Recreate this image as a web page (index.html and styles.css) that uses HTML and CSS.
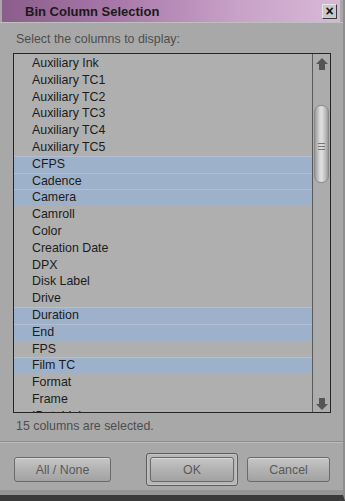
FILE: index.html
```html
<!DOCTYPE html>
<html>
<head>
<meta charset="utf-8">
<link rel="stylesheet" href="styles.css">
</head>
<body>
<div class="window">
  <div class="titlebar">
    <span class="title">Bin Column Selection</span>
    <span class="close">×</span>
  </div>
  <div class="title-line"></div>
  <div class="content">
    <div class="prompt">Select the columns to display:</div>
    <div class="listbox">
      <div class="list">
        <div class="row">Auxiliary Ink</div>
        <div class="row">Auxiliary TC1</div>
        <div class="row">Auxiliary TC2</div>
        <div class="row">Auxiliary TC3</div>
        <div class="row">Auxiliary TC4</div>
        <div class="row">Auxiliary TC5</div>
        <div class="row sel">CFPS</div>
        <div class="row sel">Cadence</div>
        <div class="row sel">Camera</div>
        <div class="row">Camroll</div>
        <div class="row">Color</div>
        <div class="row">Creation Date</div>
        <div class="row">DPX</div>
        <div class="row">Disk Label</div>
        <div class="row">Drive</div>
        <div class="row sel">Duration</div>
        <div class="row sel">End</div>
        <div class="row">FPS</div>
        <div class="row sel">Film TC</div>
        <div class="row">Format</div>
        <div class="row">Frame</div>
        <div class="row">IDataLink</div>
      </div>
      <div class="scrollbar">
        <div class="arrow up">
          <svg width="12" height="12" viewBox="0 0 12 12"><polygon points="6,0 12,6 9,6 9,12 3,12 3,6 0,6" fill="#555"/></svg>
        </div>
        <div class="track">
          <div class="thumb">
            <div class="grip"></div>
          </div>
        </div>
        <div class="arrow down">
          <svg width="12" height="12" viewBox="0 0 12 12"><polygon points="6,12 12,6 9,6 9,0 3,0 3,6 0,6" fill="#555"/></svg>
        </div>
      </div>
    </div>
    <div class="status">15 columns are selected.</div>
  </div>
  <div class="separator"></div>
  <div class="buttons">
    <button class="btn allnone">All / None</button>
    <div class="focus-ring"><button class="btn ok">OK</button></div>
    <button class="btn cancel">Cancel</button>
  </div>
</div>
</body>
</html>
```
FILE: styles.css
```css
html, body {
  margin: 0;
  padding: 0;
  background: #a8a8a8;
}
.window {
  width: 345px;
  height: 501px;
  box-sizing: border-box;
  display: flex;
  flex-direction: column;
  background: #a8a8a8;
  border-bottom: 6px solid #3a3a3a;
  border-right: 2px solid #8e8e8e;
  font-family: "Liberation Sans", Arial, sans-serif;
  font-size: 12.4px;
  overflow: hidden;
}
.titlebar {
  height: 22px;
  margin: 0 3px 0 2px;
  flex: none;
  display: flex;
  align-items: center;
  justify-content: space-between;
  padding: 0 3px 0 23px;
  background: linear-gradient(to right, #8b5d8b 0%, #a97aa9 35%, #c8a2c8 70%, #d8b8d8 100%);
}
.title {
  font-weight: bold;
  font-size: 13px;
  color: #1a1a1a;
}
.close {
  width: 13px;
  height: 13px;
  display: flex;
  align-items: center;
  justify-content: center;
  background: #c9c9c9;
  border-top: 1px solid #e4e4e4;
  border-left: 1px solid #e4e4e4;
  border-right: 1px solid #3a3a3a;
  border-bottom: 1px solid #3a3a3a;
  font-weight: bold;
  font-size: 14px;
  line-height: 13px;
  color: #111;
}
.title-line {
  height: 1px;
  flex: none;
  background: #bfbfbf;
}
.content {
  flex: none;
  padding: 0 12px 0 13px;
}
.prompt {
  height: 30px;
  box-sizing: border-box;
  padding: 8px 0 0 3px;
  line-height: 16px;
  color: #4e4e4e;
}
.listbox {
  height: 360px;
  box-sizing: border-box;
  border: 1px solid #262626;
  display: flex;
  background: #afafaf;
}
.list {
  flex: 1;
  overflow: hidden;
  padding-top: 1px;
}
.row {
  height: 16.8px;
  line-height: 16.8px;
  padding-left: 18px;
  color: #1c1c1c;
  white-space: nowrap;
}
.row.sel {
  background: #9eb1ca;
  box-shadow: inset 0 1px 0 #b3bfd0;
}
.scrollbar {
  width: 17px;
  flex: none;
  border-left: 1px solid #5a5a5a;
  display: flex;
  flex-direction: column;
  background: #acacac;
}
.arrow {
  display: flex;
  justify-content: center;
  flex: none;
}
.arrow.up {
  align-items: flex-start;
  padding-top: 4px;
  height: 14px;
}
.arrow.down {
  align-items: flex-end;
  padding-bottom: 2px;
  height: 14px;
}
.track {
  flex: 1;
  padding: 33px 1px 0 1px;
}
.thumb {
  height: 78px;
  box-sizing: border-box;
  border: 1px solid #8a8a8a;
  border-radius: 7px;
  background: linear-gradient(to right, #9c9c9c 0%, #d4d4d4 35%, #e0e0e0 50%, #c4c4c4 75%, #9a9a9a 100%);
  display: flex;
  align-items: center;
  justify-content: center;
}
.grip {
  width: 7px;
  height: 9px;
  background: repeating-linear-gradient(to bottom, #777 0, #777 1px, transparent 1px, transparent 3px);
  margin-top: 6px;
}
.status {
  height: 28px;
  box-sizing: border-box;
  padding: 5px 0 0 3px;
  line-height: 16px;
  color: #4e4e4e;
}
.separator {
  flex: none;
  height: 1px;
  background: #8c8c8c;
  border-bottom: 1px solid #bcbcbc;
}
.buttons {
  flex: 1;
  display: flex;
  align-items: flex-start;
  padding-top: 10px;
  border-bottom: 5px solid #959595;
}
.btn {
  height: 25px;
  box-sizing: border-box;
  border: 1px solid #6a6a6a;
  border-radius: 3px;
  background: linear-gradient(to bottom, #c6c6c6 0%, #b4b4b4 45%, #a2a2a2 100%);
  box-shadow: inset 0 1px 0 #d8d8d8;
  font-family: "Liberation Sans", Arial, sans-serif;
  font-size: 12.4px;
  color: #5a5a5a;
  padding: 0;
}
.allnone {
  width: 97px;
  margin: 4px 0 0 14px;
}
.focus-ring {
  width: 92px;
  height: 33px;
  box-sizing: border-box;
  margin-left: 35px;
  border: 1px solid #5c5c5c;
  border-radius: 3px;
  background: #b6b6b6;
  padding: 3px;
  box-shadow: inset 0 0 0 1px #c4c4c4;
}
.ok {
  width: 84px;
  display: block;
}
.cancel {
  width: 83px;
  margin: 4px 0 0 9px;
}
```
